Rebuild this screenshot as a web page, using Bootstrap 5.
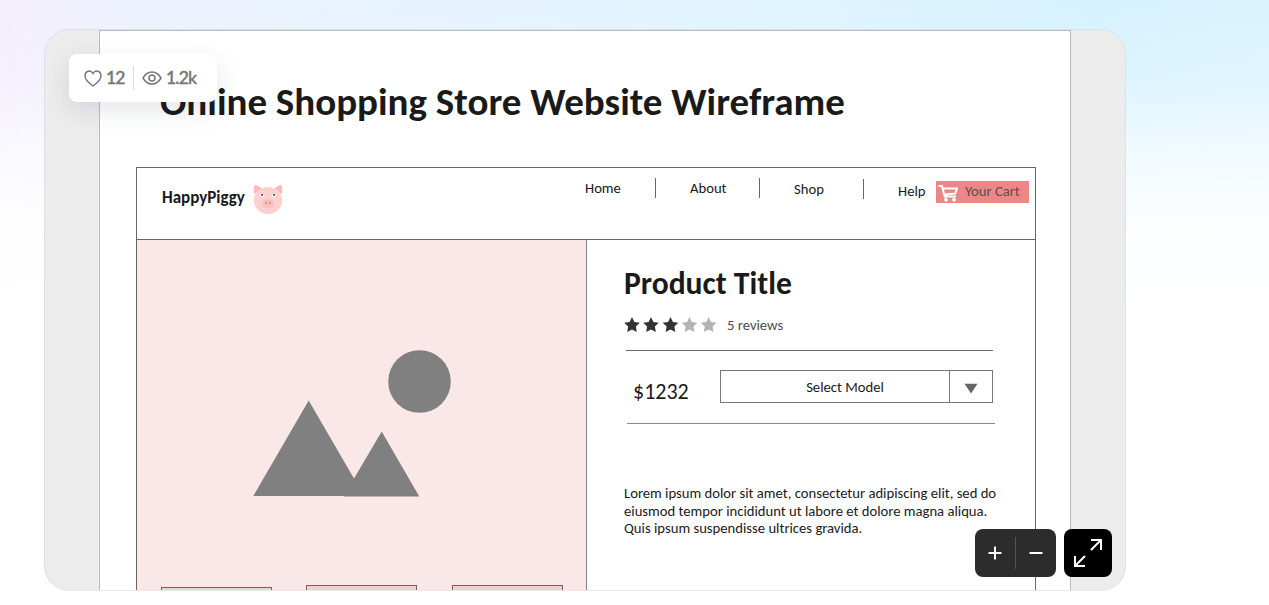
<!DOCTYPE html>
<html lang="en">
<head>
<meta charset="utf-8">
<meta name="viewport" content="width=device-width, initial-scale=1">
<title>Online Shopping Store Website Wireframe</title>
<link href="https://cdn.jsdelivr.net/npm/bootstrap@5.3.0/dist/css/bootstrap.min.css" rel="stylesheet">
<style>
body{height:605px;overflow:hidden;font-family:Carlito,Lato,sans-serif;color:#1a1a1a;
 background:
 linear-gradient(rgba(255,255,255,0) 0,rgba(255,255,255,.15) 80px,rgba(255,255,255,.62) 150px,rgba(255,255,255,.9) 220px,#fff 310px),
 linear-gradient(100deg,#f5edfb 0,#eef1fd 7%,#e6f3ff 30%,#e0f4ff 55%,#d6f2ff 80%,#dcf4ff 100%) #fff}
svg{display:block;flex:none}
.viewer{width:1082px;height:562px;margin:29px 0 0 44px;border:1px solid #dbe1e8;border-bottom-color:#e9e9e9;border-radius:25px;background:#ececec;overflow:hidden}
.sheet{width:972px;height:561px;margin-left:54px;background:#fff;border:1px solid #b9bcc2;border-bottom:0}
.sheet-title{margin:46px 0 0 60px;height:50px;line-height:50px;font-size:39px;font-weight:700;white-space:nowrap}
.frame{width:900px;height:424px;margin:40px 0 0 36px;border:1px solid #666;border-bottom:0}
.frame-head{height:72px;border-bottom:1px solid #666}
.brand{margin:20px 0 0 25px;font-size:17px;font-weight:700;line-height:20px}
.brand span{width:91px}
.menu{font-size:14.67px;line-height:18px;margin:10px 6px 0 auto}
.menu i{width:1px;height:20px;background:#666}
.cart{width:93px;height:22px;margin:3px 0 0 9px;background:#ec8787;color:#664a4a}
.photo{width:450px;background:#fae8e8;border-right:1px solid #8b8484}
.thumbs{margin:0 0 0 24px}
.thumbs div{width:111px;height:6px;background:#f1d0d3;border:1px solid #76615f;border-bottom:0}
.info{padding-left:37px;width:448px}
.info h2{font-size:31.6px;font-weight:700;line-height:36px;margin:25px 0 0}
.rule{height:1px;background:#666;width:367px;margin-left:2px}
.price{font-size:22px;width:96px;padding-left:9px;line-height:24px;padding-top:10px;height:33px}
.picker{width:273px;height:33px;border:1px solid #777;font-size:14.67px}
.picker b{width:43px;border-left:1px solid #777}
.copy{font-size:14.67px;line-height:17.6px;margin:61px 0 0;white-space:nowrap}
.stats{left:69px;top:54px;width:148px;height:48px;border-radius:8px;background:#fff;box-shadow:0 8px 24px rgba(40,50,90,.12);font:500 17.5px Lato,sans-serif;letter-spacing:-.8px;-webkit-text-stroke:.4px #777;color:#777;padding-left:15px}
.stats span{margin-top:-1px}
.stats i{width:1px;height:24px;background:#ddd}
.zoomer{left:975px;top:529px;gap:8px}
.zoomer .pair{width:81px;height:48px;border-radius:8px;background:#2c2c2c}
.zoomer .full{width:48px;height:48px;border-radius:8px;background:#000}
</style>
</head>
<body>
<main class="viewer">
 <article class="sheet">
  <h1 class="sheet-title">Online Shopping Store Website Wireframe</h1>
  <section class="frame">
   <header class="frame-head d-flex">
    <div class="brand d-flex"><span>HappyPiggy</span>
     <svg width="30" height="31" viewBox="0 0 30 31" style="margin-top:-4px"><path d="M1 10Q0 3 2 1Q5 1 9 5ZM29 10Q30 3 28 1Q25 1 21 5Z" fill="#fbb9b7"/><ellipse cx="15" cy="16.500" rx="14.200" ry="13.500" fill="#fdd0d0"/><ellipse cx="15" cy="19.500" rx="5.500" ry="4.500" fill="#fcbcbc"/><circle cx="9.300" cy="11.500" r="1.800" fill="#fff"/><circle cx="20.700" cy="11.500" r="1.800" fill="#fff"/><path d="M8.300 10h1.600v1.700H8.300zM20.300 10h1.600v1.700h-1.600z" fill="#333"/><circle cx="13.300" cy="19" r=".7" fill="#a55"/><circle cx="17" cy="19" r=".7" fill="#a55"/></svg>
    </div>
    <nav class="menu d-flex">
     <span style="width:70px;padding-top:1px">Home</span><i></i>
     <span style="width:69px;margin-left:34px;padding-top:1px">About</span><i></i>
     <span style="width:69px;margin-left:34px;padding-top:2px">Shop</span><i style="margin-top:1px"></i>
     <span style="margin-left:34px;padding-top:4px;width:29px">Help</span>
     <a class="cart d-flex align-items-center text-decoration-none" href="#"><svg width="22" height="21" viewBox="0 0 22 21" fill="none" stroke="#fff" stroke-width="2"><path d="M2.500 4H6l2.700 10.500H20M7 6.500h14L19.300 11.500 8.500 12.500"/><circle cx="10" cy="17.700" r="1.100" fill="#fff" stroke-width="1.500"/><circle cx="18" cy="17.700" r="1.100" fill="#fff" stroke-width="1.500"/></svg><span style="margin:-2px 0 0 7px">Your Cart</span></a>
    </nav>
   </header>
   <div class="d-flex h-100">
    <div class="photo">
     <svg width="449" height="345" viewBox="137 240 449 345" fill="#808080"><path d="M308.700 400.500L354 478.500L381.700 431.500L419.300 496.500H344V496H253.300Z"/><circle cx="419.500" cy="381.500" r="31.300"/></svg>
     <div class="thumbs d-flex"><div style="margin-top:2px"></div><div style="margin-left:34px"></div><div style="margin-left:35px"></div></div>
    </div>
    <div class="info">
     <h2>Product Title</h2>
     <div class="d-flex align-items-center" style="height:20px;margin-top:14px">
      <svg width="93" height="16" viewBox="0 0 93 16"><defs><path id="star" d="M8 0l2.400 4.900 5.400.800-3.900 3.800.9 5.500L8 12.500l-4.800 2.500.9-5.500L.2 5.700l5.400-.8z"/></defs><g fill="#333"><use href="#star"/><use href="#star" x="19"/><use href="#star" x="38.500"/></g><g fill="#b3b3b3"><use href="#star" x="57.500"/><use href="#star" x="76.700"/></g></svg>
      <span style="font-size:14.67px;margin-left:10px;color:#4d4d4d">5 reviews</span>
     </div>
     <div class="rule" style="margin-top:15px"></div>
     <div class="d-flex" style="margin:19px 0 20px"><div class="price">$1232</div>
      <div class="picker d-flex align-items-center"><span class="flex-fill text-center" style="padding-left:20px">Select Model</span><b class="h-100 d-flex align-items-center justify-content-center"><svg width="14" height="11" viewBox="0 0 14 11" style="margin-top:3px"><path d="M.500.800h13L7 10.500z" fill="#666"/></svg></b></div>
     </div>
     <div class="rule" style="width:368px;margin-left:3px;background:#888"></div>
     <p class="copy">Lorem ipsum dolor sit amet, consectetur adipiscing elit, sed do<br>eiusmod tempor incididunt ut labore et dolore magna aliqua.<br>Quis ipsum suspendisse ultrices gravida.</p>
    </div>
   </div>
  </section>
 </article>
</main>
<div class="stats position-absolute d-flex align-items-center">
 <svg width="18" height="17" viewBox="0 0 18 17" fill="none" stroke="#777" stroke-width="1.400"><path d="M9 16C6 13.700 1 10.500 1 5.700 1 1 6.500-.8 9 3.500 11.500-.8 17 1 17 5.700 17 10.500 12 13.700 9 16Z"/></svg>
 <span style="width:27px;margin-left:4px">12</span><i></i>
 <svg width="20" height="14" viewBox="0 0 20 14" style="margin-left:8px" fill="none" stroke="#777" stroke-width="1.500"><path d="M1 7Q4.500 1 10 1T19 7Q15.500 13 10 13T1 7Z"/><circle cx="10" cy="7" r="3"/></svg>
 <span style="margin-left:4px">1.2k</span>
</div>
<div class="zoomer position-absolute d-flex">
 <div class="pair"><svg width="81" height="48" fill="none" stroke="#fff" stroke-width="2"><path d="M13.500 24h13M20 17.500v13M54.500 24h13"/><path d="M40.500 8v32" stroke="#555" stroke-width="1"/></svg></div>
 <div class="full"><svg width="48" height="48" fill="none" stroke="#fff" stroke-width="2"><path d="M27 11h10v10M37 11L27 21M11 27v10h10M11 37L21 27"/></svg></div>
</div>
<script src="https://cdn.jsdelivr.net/npm/bootstrap@5.3.0/dist/js/bootstrap.bundle.min.js"></script>
</body>
</html>
